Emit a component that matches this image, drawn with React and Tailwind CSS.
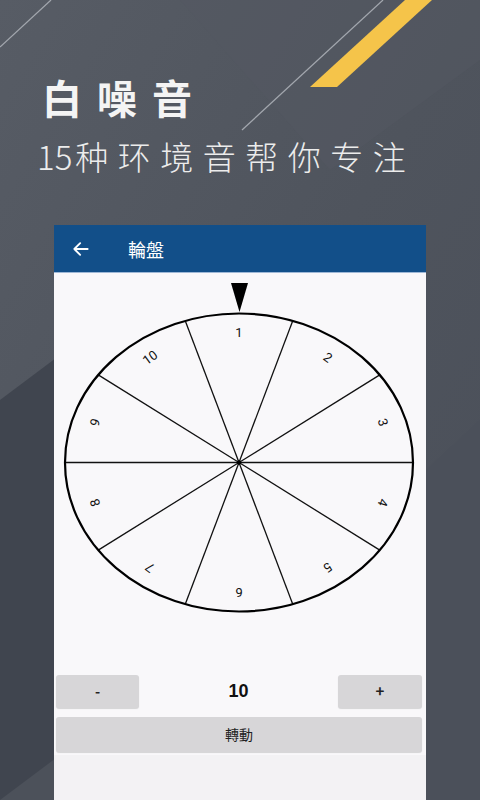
import React from 'react'

// ── Wheel geometry (px, relative to the wheel svg) ──────────────────────────
const CX = 185
const CY = 189.5
const RX = 174
const RY = 149
const SEGMENTS = 10

const rad = d => (d * Math.PI) / 180

const spokes = Array.from({ length: SEGMENTS }, (_, k) => {
  const a = rad(18 + 36 * k)
  return { x: CX + RX * Math.sin(a), y: CY - RY * Math.cos(a) }
})

const labels = Array.from({ length: SEGMENTS }, (_, k) => {
  const deg = 36 * k
  const a = rad(deg)
  return {
    n: k + 1,
    deg,
    x: CX + 0.87 * RX * Math.sin(a),
    y: CY - 0.87 * RY * Math.cos(a),
  }
})

function Backdrop() {
  return (
    <svg className="absolute inset-0" width="480" height="800" viewBox="0 0 480 800">
      <defs>
        <linearGradient id="bg" x1="0" y1="0" x2="1" y2="1">
          <stop offset="0" stopColor="#575c65" />
          <stop offset="0.5" stopColor="#4f545d" />
          <stop offset="1" stopColor="#4a4f59" />
        </linearGradient>
      </defs>
      <rect width="480" height="800" fill="url(#bg)" />
      <polygon points="0,400 120,310 120,800 0,800" fill="#40454f" />
      <polygon points="0,800 60,755 60,800" fill="#4c515a" />
      <polygon points="426,470 480,420 480,800 426,800" fill="#4b505a" />
      <polygon points="180,0 480,0 480,60 330,170" fill="#535861" opacity="0.5" />
      <line x1="0" y1="47" x2="51" y2="0" stroke="#a3a7ae" strokeWidth="1.2" />
      <line x1="242" y1="130" x2="383" y2="0" stroke="#a3a7ae" strokeWidth="1.2" />
      <polygon points="310,87 337,87 432,0 405,0" fill="#f5c44a" />
    </svg>
  )
}

function Wheel() {
  return (
    <svg width="372" height="395" viewBox="0 0 372 395" className="block">
      <polygon points="177,10 194,10 185.5,39" fill="#000" />
      {spokes.map((p, i) => (
        <line key={i} x1={CX} y1={CY} x2={p.x} y2={p.y} stroke="#111" strokeWidth="1.3" />
      ))}
      <ellipse cx={CX} cy={CY} rx={RX} ry={RY} fill="none" stroke="#000" strokeWidth="2.2" />
      <circle cx={CX} cy={CY} r="2.2" fill="#000" />
      {labels.map(l => (
        <text
          key={l.n}
          x={l.x}
          y={l.y}
          transform={`rotate(${l.deg} ${l.x} ${l.y})`}
          textAnchor="middle"
          dominantBaseline="central"
          fontSize="13"
          fill="#111"
          style={{ fontFamily: 'Roboto, "Noto Sans", sans-serif' }}
        >
          {l.n}
        </text>
      ))}
    </svg>
  )
}

export default function App() {
  return (
    <div className="relative h-[800px] w-[480px] overflow-hidden font-['Noto_Sans_CJK_SC',sans-serif]">
      <Backdrop />

      <div className="relative flex h-full flex-col">
        {/* ── Headline ── */}
        <div className="pl-[42px] pt-[69px]">
          <h1 className="text-[40px] font-bold leading-[56px] tracking-[15px] text-[#f4f4f4]">白噪音</h1>
          <p className="-ml-[5px] mt-[9px] text-[33px] font-light leading-[44px] tracking-[9.5px] text-[#ececec]">
            <span className="mr-[3px] tracking-normal">15</span>种环境音帮你专注
          </p>
        </div>

        {/* ── Phone screen ── */}
        <div className="ml-[54px] mt-[47px] flex w-[372px] flex-1 flex-col bg-[#f9f8fa]">
          <div className="flex h-[48px] items-center border-b border-[#9fb8d6] bg-[#124f89] text-white">
            <svg className="ml-[17px]" width="20" height="20" viewBox="0 0 24 24" fill="none" stroke="#fff" strokeWidth="2.2" strokeLinecap="round" strokeLinejoin="round">
              <path d="M20 12H4M11 5l-7 7 7 7" />
            </svg>
            <span className="ml-[37px] text-[18px] leading-none">輪盤</span>
          </div>

          <Wheel />

          <div className="mt-[7px] flex items-center pl-[2px] pr-[4px]">
            <button className="h-[33px] w-[83px] rounded-[3px] bg-[#d7d6d8] text-[14px] font-bold text-[#222] shadow-[0_1px_1px_rgba(0,0,0,0.15)]">
              -
            </button>
            <div className="flex-1 text-center font-['Liberation_Sans',sans-serif] text-[18px] font-bold text-[#111]">10</div>
            <button className="h-[33px] w-[84px] rounded-[3px] bg-[#d7d6d8] text-[15px] font-bold text-[#222] shadow-[0_1px_1px_rgba(0,0,0,0.15)]">
              +
            </button>
          </div>

          <div className="mt-[9px] pl-[2px] pr-[4px]">
            <button className="h-[35px] w-full rounded-[3px] bg-[#d7d6d8] text-[14px] text-[#222] shadow-[0_1px_1px_rgba(0,0,0,0.15)]">
              轉動
            </button>
          </div>

          <div className="mt-[3px] flex-1 bg-[#f3f2f4]" />
        </div>
      </div>
    </div>
  )
}
